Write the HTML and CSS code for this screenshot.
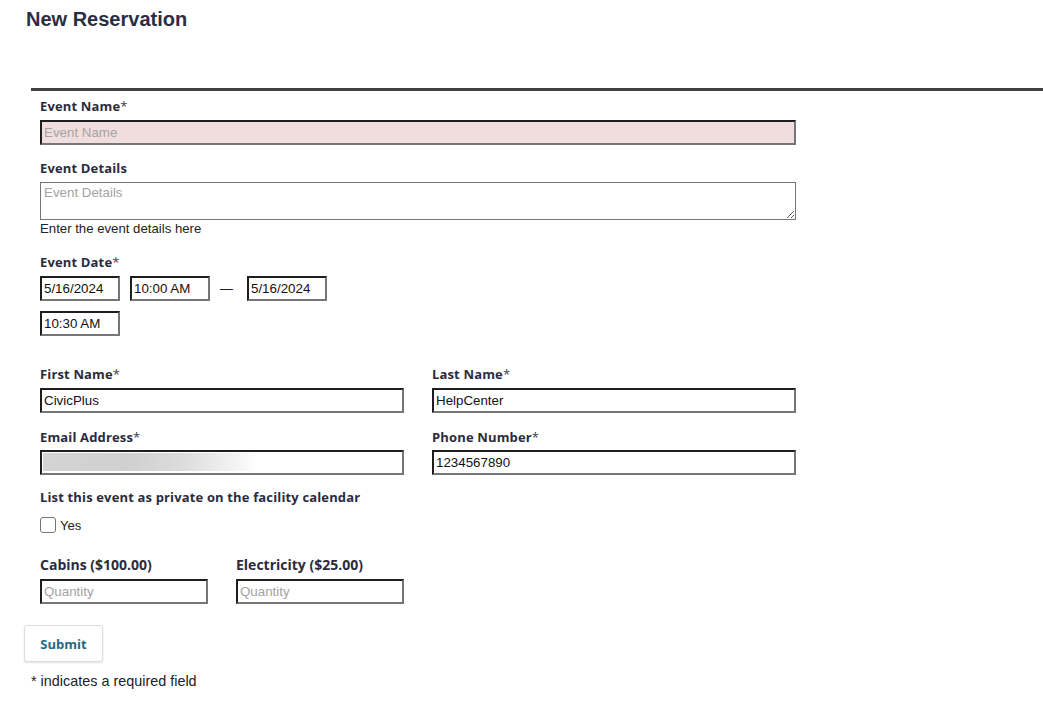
FILE: index.html
```html
<!DOCTYPE html>
<html lang="en">
<head>
<meta charset="utf-8">
<title>New Reservation</title>
<link rel="stylesheet" href="styles.css">
</head>
<body>
<h1 class="title">New Reservation</h1>
<div class="rule"></div>
<form class="form">
  <div class="fields">
    <div class="field first">
      <label class="label">Event Name<span class="req">*</span></label>
      <input class="input error" type="text" placeholder="Event Name">
    </div>
    <div class="field gap-15">
      <label class="label">Event Details</label>
      <textarea class="textarea" placeholder="Event Details"></textarea>
      <div class="help">Enter the event details here</div>
    </div>
    <div class="field gap-18">
      <label class="label">Event Date<span class="req">*</span></label>
      <div class="date-row">
        <input class="input date" type="text" value="5/16/2024">
        <input class="input date" type="text" value="10:00 AM">
        <span class="dash">—</span>
        <input class="input date" type="text" value="5/16/2024">
      </div>
      <div class="date-row second">
        <input class="input date" type="text" value="10:30 AM">
      </div>
    </div>
    <div class="pair gap-30">
      <div class="field">
        <label class="label">First Name<span class="req">*</span></label>
        <input class="input" type="text" value="CivicPlus">
      </div>
      <div class="field">
        <label class="label">Last Name<span class="req">*</span></label>
        <input class="input" type="text" value="HelpCenter">
      </div>
    </div>
    <div class="pair gap-16">
      <div class="field">
        <label class="label">Email Address<span class="req">*</span></label>
        <input class="input blurred" type="text" value="">
      </div>
      <div class="field">
        <label class="label">Phone Number<span class="req">*</span></label>
        <input class="input" type="text" value="1234567890">
      </div>
    </div>
    <div class="field gap-14">
      <label class="label">List this event as private on the facility calendar</label>
      <label class="check">
        <input class="checkbox" type="checkbox">
        <span>Yes</span>
      </label>
    </div>
    <div class="qty-pair">
      <div class="field">
        <label class="label big">Cabins ($100.00)</label>
        <input class="input" type="text" placeholder="Quantity">
      </div>
      <div class="field">
        <label class="label big">Electricity ($25.00)</label>
        <input class="input" type="text" placeholder="Quantity">
      </div>
    </div>
  </div>
  <div class="actions">
    <button class="submit" type="button">Submit</button>
  </div>
  <p class="note">* indicates a required field</p>
</form>
</body>
</html>
```

FILE: styles.css
```css
html, body {
  margin: 0;
  padding: 0;
  background: #ffffff;
}

body {
  font-family: "Liberation Sans", Arial, sans-serif;
  color: #222222;
}

.title {
  margin: 0 0 0 26px;
  padding-top: 7px;
  font-family: "Liberation Sans", Arial, sans-serif;
  font-size: 20px;
  line-height: 24px;
  font-weight: 700;
  color: #2a2e42;
}

.rule {
  margin: 57px 0 0 31px;
  height: 3px;
  background: #404040;
}

.form {
  margin: 0;
}

.fields {
  margin-left: 40px;
  width: 756px;
}

.field {
  display: flex;
  flex-direction: column;
  align-items: flex-start;
}

.field.first { margin-top: 7px; }
.gap-15 { margin-top: 15px; }
.gap-18 { margin-top: 18px; }
.gap-30 { margin-top: 30px; }
.gap-16 { margin-top: 16px; }
.gap-14 { margin-top: 14px; }

.label {
  font-family: "Open Sans", sans-serif;
  font-weight: 700;
  font-size: 13px;
  line-height: 16px;
  letter-spacing: 0.15px;
  color: #2a2c3e;
  margin-bottom: 6px;
}

.label.big {
  font-weight: 700;
  font-size: 14px;
  line-height: 18px;
  letter-spacing: 0;
}

.req {
  font-weight: 400;
  color: #3a3c4a;
}

.input {
  box-sizing: border-box;
  width: 100%;
  height: 25px;
  margin: 0;
  padding: 1px 2px;
  font-family: "Liberation Sans", Arial, sans-serif;
  font-size: 13.333px;
  color: #111111;
  background: #ffffff;
  border-width: 2px;
  border-style: solid;
  border-color: #1e1e1e #767676 #767676 #1e1e1e;
  border-radius: 0;
  outline: none;
}

.input::placeholder,
.textarea::placeholder {
  color: #a3a3a3;
}

.input.error {
  background: #f0dede;
}

.input.blurred {
  background-color: #ffffff;
  background-image: linear-gradient(90deg, #d4d4d4 0%, #d0d0d0 40%, #dddcdc 65%, #f4f4f4 90%, #ffffff 100%);
  background-repeat: no-repeat;
  background-size: 215px 18px;
  background-position: 1px 1px;
}

.textarea {
  box-sizing: border-box;
  width: 100%;
  height: 38px;
  margin: 0;
  padding: 2px 3px;
  font-family: "Liberation Sans", Arial, sans-serif;
  font-size: 13.333px;
  border: 1px solid #767676;
  border-radius: 0;
  resize: both;
  display: block;
}

.help {
  margin-top: 1px;
  font-size: 13.2px;
  line-height: 15px;
  color: #222222;
}

.date-row {
  display: flex;
  align-items: center;
  gap: 10px;
}

.date-row.second {
  margin-top: 10px;
}

.input.date {
  width: 80px;
}

.dash {
  font-size: 13px;
  color: #222222;
  padding-right: 4px;
}

.pair {
  display: grid;
  grid-template-columns: 364px 364px;
  column-gap: 28px;
}

.pair .label {
  margin-bottom: 6px;
}

.gap-16 .label {
  margin-bottom: 5px;
}

.check {
  display: flex;
  align-items: center;
  gap: 4px;
  margin-top: 6px;
  font-size: 13px;
  color: #222222;
}

.checkbox {
  appearance: none;
  -webkit-appearance: none;
  box-sizing: border-box;
  width: 16px;
  height: 16px;
  margin: 0;
  border: 1px solid #767676;
  border-radius: 3px;
  background: #ffffff;
}

.qty-pair {
  display: grid;
  grid-template-columns: 168px 168px;
  column-gap: 28px;
  margin-top: 23px;
}

.qty-pair .label {
  margin-bottom: 5px;
}

.actions {
  margin: 21px 0 0 24px;
}

.submit {
  box-sizing: border-box;
  width: 79px;
  height: 37px;
  padding: 0;
  background: #ffffff;
  border: 1px solid #dddddd;
  border-radius: 3px;
  box-shadow: 0 1px 2px rgba(0, 0, 0, 0.12);
  font-family: "Open Sans", sans-serif;
  font-weight: 700;
  font-size: 13px;
  color: #1f6a88;
  cursor: pointer;
}

.note {
  margin: 11px 0 0 31px;
  font-size: 14.4px;
  line-height: 16px;
  color: #222222;
}
```
